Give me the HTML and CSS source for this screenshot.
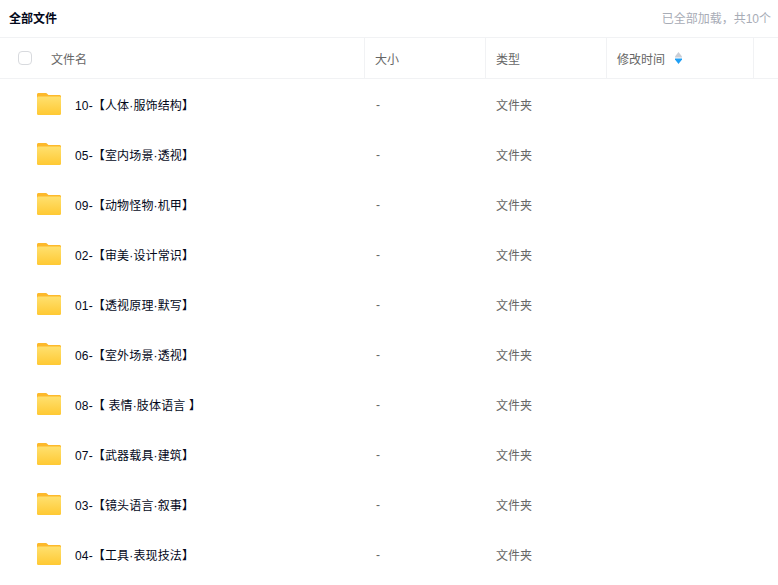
FILE: index.html
```html
<!DOCTYPE html>
<html lang="zh">
<head>
<meta charset="utf-8">
<title>全部文件</title>
<link rel="stylesheet" href="styles.css">
</head>
<body>
<svg class="defs" width="0" height="0" aria-hidden="true">
  <defs>
    <linearGradient id="fg" x1="0" y1="0" x2="0" y2="1">
      <stop offset="0" stop-color="#ffe06e"/>
      <stop offset="1" stop-color="#ffc933"/>
    </linearGradient>
    <symbol id="folder" viewBox="0 0 24 22">
      <path d="M1.5 0h7.2c.8 0 1.2.3 1.700.9l1 1.100h11c1 0 1.600.6 1.600 1.600V20c0 1.200-.7 2-1.900 2H1.900C.7 22 0 21.200 0 20V1.500C0 .6.600 0 1.500 0z" fill="#fdb92b"/>
      <path d="M1.500 3.600h21c.9 0 1.500.6 1.500 1.500V20c0 1.200-.7 2-1.900 2H1.900C.7 22 0 21.200 0 20V5.100c0-.9.600-1.500 1.500-1.500z" fill="url(#fg)"/>
    </symbol>
  </defs>
</svg>
<header class="top">
  <span class="title">全部文件</span>
  <span class="status">已全部加载，共10个</span>
</header>
<div class="thead">
  <div class="col col-name"><span class="check"></span><span>文件名</span></div>
  <div class="col col-size">大小</div>
  <div class="col col-type">类型</div>
  <div class="col col-time"><span>修改时间</span>
    <svg class="sort" width="7" height="12" viewBox="0 0 7 12"><path d="M3.500 0L7 4.500V5.500H0V4.500z" fill="#c9ced6"/><path d="M0 6.500H7V7.500L3.500 12L0 7.500z" fill="#1f9ff5"/></svg>
  </div>
  <div class="col col-end"></div>
</div>
<main class="rows">
  <div class="row"><svg class="ico"><use href="#folder"/></svg><span class="name">10-【人体·服饰结构】</span><span class="size">-</span><span class="type">文件夹</span></div>
  <div class="row"><svg class="ico"><use href="#folder"/></svg><span class="name">05-【室内场景·透视】</span><span class="size">-</span><span class="type">文件夹</span></div>
  <div class="row"><svg class="ico"><use href="#folder"/></svg><span class="name">09-【动物怪物·机甲】</span><span class="size">-</span><span class="type">文件夹</span></div>
  <div class="row"><svg class="ico"><use href="#folder"/></svg><span class="name">02-【审美·设计常识】</span><span class="size">-</span><span class="type">文件夹</span></div>
  <div class="row"><svg class="ico"><use href="#folder"/></svg><span class="name">01-【透视原理·默写】</span><span class="size">-</span><span class="type">文件夹</span></div>
  <div class="row"><svg class="ico"><use href="#folder"/></svg><span class="name">06-【室外场景·透视】</span><span class="size">-</span><span class="type">文件夹</span></div>
  <div class="row"><svg class="ico"><use href="#folder"/></svg><span class="name">08-【 表情·肢体语言 】</span><span class="size">-</span><span class="type">文件夹</span></div>
  <div class="row"><svg class="ico"><use href="#folder"/></svg><span class="name">07-【武器载具·建筑】</span><span class="size">-</span><span class="type">文件夹</span></div>
  <div class="row"><svg class="ico"><use href="#folder"/></svg><span class="name">03-【镜头语言·叙事】</span><span class="size">-</span><span class="type">文件夹</span></div>
  <div class="row"><svg class="ico"><use href="#folder"/></svg><span class="name">04-【工具·表现技法】</span><span class="size">-</span><span class="type">文件夹</span></div>
</main>
</body>
</html>
```
FILE: styles.css
```css
* { box-sizing: border-box; }
html, body { margin: 0; height: 585px; overflow: hidden; background: #fff; }
body { font-family: "Liberation Sans", "Noto Sans CJK SC", sans-serif; font-size: 12px; color: #666; }
.defs { position: absolute; }
.top {
  height: 38px; padding: 0 7px 3px 9px; display: flex; align-items: center; justify-content: space-between;
  border-bottom: 1px solid #f1f2f4;
}
.title { font-weight: 700; color: #03081a; }
.status { color: #a8acb6; }
.thead { height: 41px; display: flex; border-bottom: 1px solid #f1f2f4; padding-bottom: 1px; }
.col { display: flex; align-items: center; padding-left: 10px; border-right: 1px solid #f1f2f4; color: #666; margin-bottom: -1px; }
.col-name { width: 365px; padding-left: 18px; gap: 19px; }
.col-size, .col-type { width: 121px; }
.col-time { width: 147px; gap: 10px; }
.col-end { border-right: 0; flex: 1; }
.check { width: 14px; height: 14px; border: 1px solid #d8dade; border-radius: 4px; }
.row { height: 50px; display: flex; align-items: center; padding-left: 37px; }
.ico { width: 24px; height: 22px; flex: none; }
.name { width: 315px; padding-left: 14px; color: #03081a; white-space: pre; letter-spacing: .15px; }
.size { width: 120px; padding-top: 2px; }
.type { color: #666; }
```
